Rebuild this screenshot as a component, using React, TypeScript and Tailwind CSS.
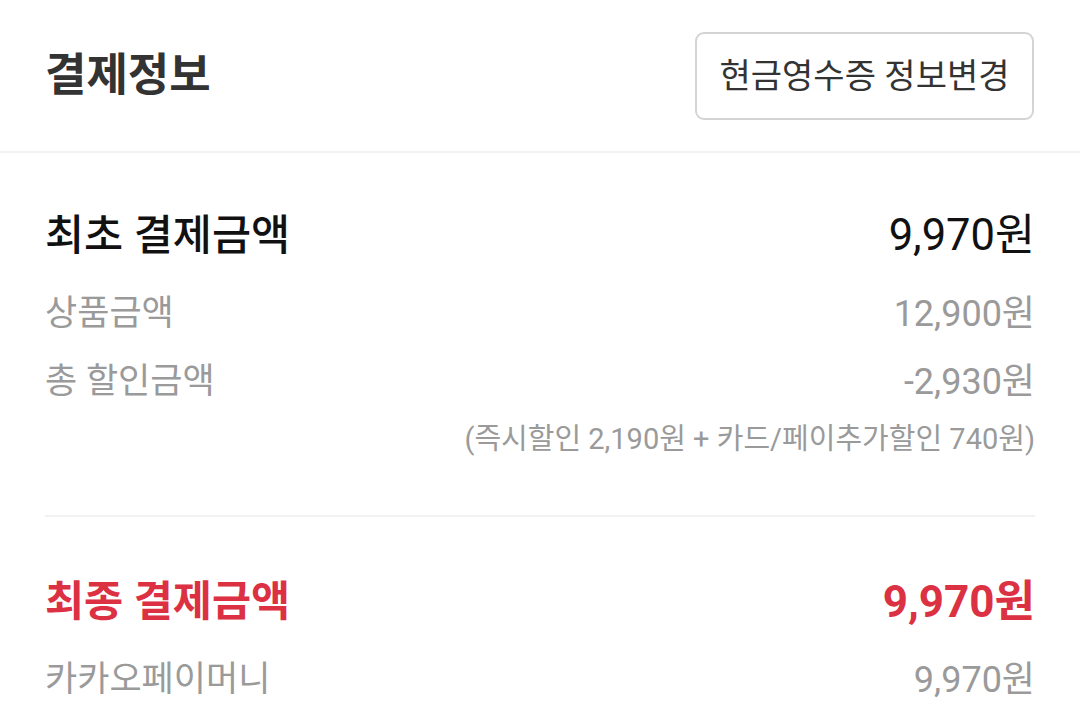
const font = { fontFamily: 'Roboto, "Noto Sans CJK KR", sans-serif' };

function Row({ label, value, labelClass, valueClass, height }: { label: string; value: string; labelClass: string; valueClass: string; height: string }) {
  return (
    <div className={`flex items-center justify-between ${height}`}>
      <span className={labelClass}>{label}</span>
      <span className={valueClass}>{value}</span>
    </div>
  );
}

export default function App() {
  return (
    <div className="w-[1080px] h-[713px] overflow-hidden bg-white" style={font}>
      <header className="h-[153px] flex items-center justify-between pl-[45px] pr-[46px] border-b-2 border-[#f2f2f2]">
        <h1 className="text-[45px] font-bold text-[#333333] leading-none">결제정보</h1>
        <button className="w-[339px] h-[88px] rounded-[9px] border-2 border-[#d4d4d4] text-[34px] text-[#333333] leading-none">
          현금영수증 정보변경
        </button>
      </header>

      <section className="px-[45px] pt-[55px]">
        <Row
          height="h-[56px]"
          label="최초 결제금액"
          value="9,970원"
          labelClass="text-[42.5px] font-medium text-[#111111]"
          valueClass="text-[43.5px] text-[#111111]"
        />
        <div className="mt-4">
          <Row
            height="h-[68px]"
            label="상품금액"
            value="12,900원"
            labelClass="text-[35px] text-[#9a9a9a]"
            valueClass="text-[36px] text-[#9a9a9a]"
          />
          <Row
            height="h-[68px]"
            label="총 할인금액"
            value="-2,930원"
            labelClass="text-[35px] text-[#9a9a9a]"
            valueClass="text-[36px] text-[#9a9a9a]"
          />
        </div>
        <div className="mt-1 h-[40px] flex items-center justify-end text-[29px] text-[#9a9a9a]">
          (즉시할인 2,190원 + 카드/페이추가할인 740원)
        </div>

        <div className="mt-[55px] h-[2px] bg-[#f2f2f2]" />

        <div className="mt-[57px]">
          <Row
            height="h-[56px]"
            label="최종 결제금액"
            value="9,970원"
            labelClass="text-[42.5px] font-bold text-[#dc3142]"
            valueClass="text-[44px] font-bold text-[#dc3142]"
          />
        </div>
        <div className="mt-4">
          <Row
            height="h-[68px]"
            label="카카오페이머니"
            value="9,970원"
            labelClass="text-[35px] text-[#9a9a9a]"
            valueClass="text-[36px] text-[#9a9a9a]"
          />
        </div>
      </section>
    </div>
  );
}
